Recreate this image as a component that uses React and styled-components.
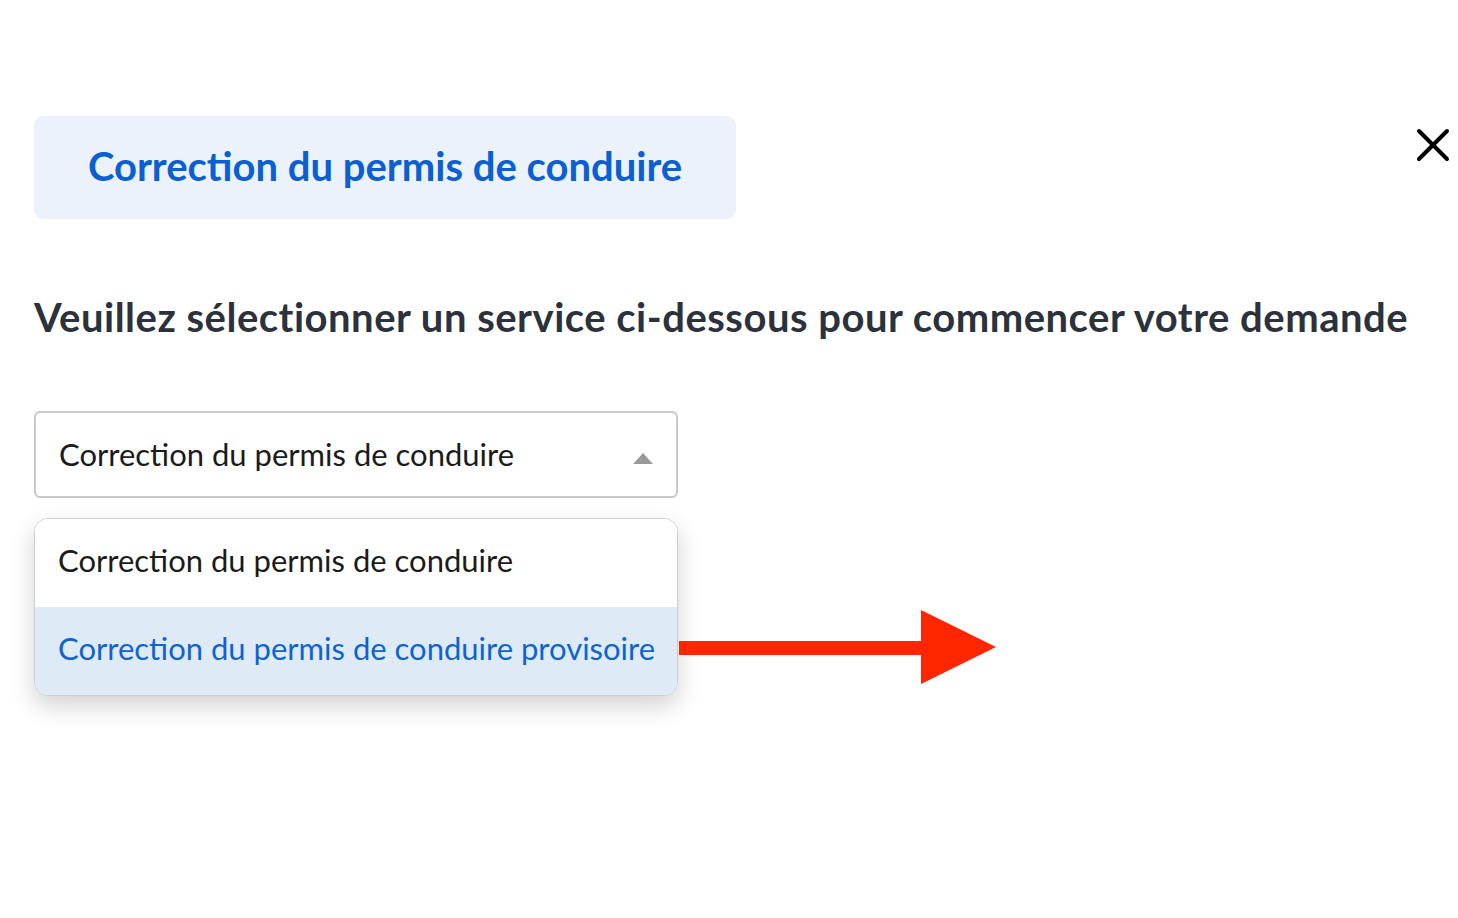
import React from "react";
import styled, { createGlobalStyle } from "styled-components";

const Global = createGlobalStyle`
  html, body { margin: 0; padding: 0; background: #fff; }
  body { font-family: Lato, "Open Sans", sans-serif; }
`;

const Page = styled.div`
  width: 1458px;
  height: 918px;
  box-sizing: border-box;
  padding: 116px 8px 0 34px;
  position: relative;
`;

const Header = styled.div`
  display: flex;
  justify-content: space-between;
  align-items: flex-start;
`;

const TitleBox = styled.div`
  width: 702px;
  height: 103px;
  box-sizing: border-box;
  background: #ebf2fc;
  border-radius: 9px;
  display: flex;
  align-items: center;
  justify-content: center;
  padding-bottom: 4px;
`;

const Title = styled.h1`
  margin: 0;
  font-size: 40px;
  font-weight: 700;
  color: #0a5fd1;
  letter-spacing: 0;
`;

const Close = styled.button`
  border: 0;
  background: none;
  padding: 0;
  margin-top: 12px;
  width: 34px;
  height: 34px;
  display: flex;
  align-items: center;
  justify-content: center;
`;

const Heading = styled.h2`
  margin: 70px 0 0;
  font-size: 40px;
  font-weight: 700;
  color: #2c323b;
  line-height: 56px;
  letter-spacing: 0.5px;
`;

const SelectWrap = styled.div`
  position: relative;
  margin-top: 66px;
  width: 644px;
`;

const SelectBox = styled.div`
  height: 87px;
  box-sizing: border-box;
  border: 2px solid #c9c9c9;
  border-radius: 6px;
  display: flex;
  align-items: center;
  justify-content: space-between;
  padding: 0 23px 1px 23px;
  font-size: 31px;
  color: #1b1b1b;
`;

const Caret = styled.span`
  width: 0;
  height: 0;
  border-left: 10.5px solid transparent;
  border-right: 10.5px solid transparent;
  border-bottom: 11px solid #9a9a9a;
  margin-top: 8px;
`;

const Menu = styled.ul`
  position: absolute;
  top: 107px;
  left: 0;
  width: 644px;
  box-sizing: border-box;
  margin: 0;
  padding: 0;
  list-style: none;
  border: 1.5px solid #cfcfcf;
  border-radius: 14px;
  overflow: hidden;
  background: #fff;
  box-shadow: 0 10px 24px rgba(0, 0, 0, 0.18);
`;

const Option = styled.li`
  height: 88px;
  box-sizing: border-box;
  display: flex;
  align-items: center;
  padding: 0 0 6px 23px;
  font-size: 31px;
  color: ${(p) => (p.$active ? "#0f63d1" : "#1b1b1b")};
  background: ${(p) => (p.$active ? "#deebf7" : "#fff")};
`;

const Arrow = styled.svg`
  position: absolute;
  left: 679px;
  top: 609px;
`;

export default function App() {
  return (
    <>
      <Global />
      <Page>
        <Header>
          <TitleBox>
            <Title>Correction du permis de conduire</Title>
          </TitleBox>
          <Close aria-label="Fermer">
            <svg width="34" height="34" viewBox="0 0 34 34">
              <path d="M3 3 L31 31 M31 3 L3 31" stroke="#000" strokeWidth="4" strokeLinecap="round" />
            </svg>
          </Close>
        </Header>
        <Heading>Veuillez sélectionner un service ci-dessous pour commencer votre demande</Heading>
        <SelectWrap>
          <SelectBox>
            <span>Correction du permis de conduire</span>
            <Caret />
          </SelectBox>
          <Menu>
            <Option>Correction du permis de conduire</Option>
            <Option $active>Correction du permis de conduire provisoire</Option>
          </Menu>
        </SelectWrap>
        <Arrow width="320" height="78" viewBox="0 0 320 78">
          <rect x="0" y="32" width="245" height="14" fill="#ff2600" />
          <polygon points="242,1 317,38 242,75" fill="#ff2600" />
        </Arrow>
      </Page>
    </>
  );
}
